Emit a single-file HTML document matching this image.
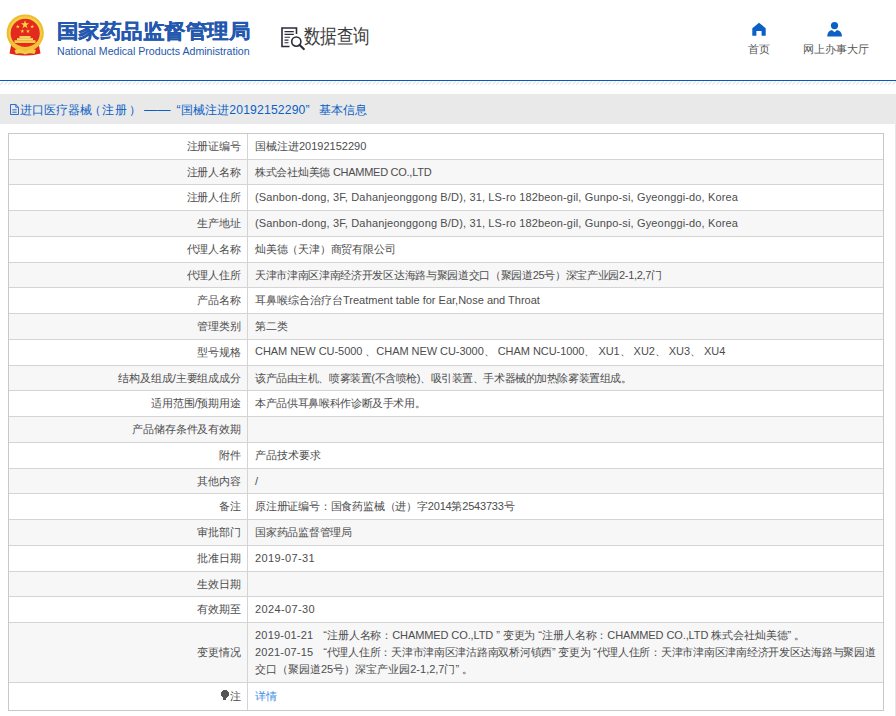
<!DOCTYPE html>
<html><head><meta charset="utf-8">
<style>
*{box-sizing:border-box}
html,body{margin:0;padding:0;background:#fff;width:896px;height:716px;overflow:hidden;position:relative;font-family:"Liberation Sans",sans-serif;}
.abs{position:absolute;white-space:nowrap}
#title{left:57px;top:17.5px;transform:scaleY(0.93);transform-origin:0 0;font-size:21px;font-weight:bold;color:#2458ae;line-height:30px;letter-spacing:0.45px;-webkit-text-stroke:0.35px #2458ae}
#en{left:57px;top:44px;font-size:10.6px;letter-spacing:0px;color:#2458ae;line-height:14px}
#dq{left:304px;top:22px;font-size:18px;color:#3a3a3a;line-height:26px;transform:scale(0.91,1.1);transform-origin:0 0}
.nav{font-size:11px;color:#555;line-height:14px}
#blue{left:0;top:80px;width:896px;height:1px;background:#0659c2}
#hatch{left:0;top:81px;width:896px;height:4px}
#bar{left:0;top:94px;width:896px;height:30px;background:#e9e9e9;border-bottom:1px solid #e7e9ef}
.bt{top:102px;font-size:12.2px;color:#0b5fc6;line-height:16px}
#vline{left:895px;top:124px;width:1px;height:592px;background:#e6e6e6}
#tbl{left:8px;top:133px;width:876px;height:578px;border:1px solid #c9c9c9}
.row{position:absolute;left:0;width:874px;border-top:1px solid #d4d4d4}
.row.g{background:#f7f7f7}
.pin{display:inline-block;position:relative;top:-1.5px;width:8px;height:10px;margin-right:1.5px;background:radial-gradient(circle at 4px 4px,#555 0 3.8px,transparent 4px),linear-gradient(#555,#555) 2.5px 7px/3px 3px no-repeat}
.lat{letter-spacing:0.15px;position:relative;top:-1px}
.lab{position:absolute;left:0;width:238px;top:0;bottom:0;text-align:right;padding-right:6px;letter-spacing:-0.12px;font-size:11px;color:#4d4d4d;display:flex;align-items:center;justify-content:flex-end}
.val{position:absolute;left:238px;right:0;top:0;bottom:0;border-left:1px solid #d4d4d4;padding-left:7px;font-size:11px;color:#4d4d4d;display:flex;align-items:center}
</style></head><body>
<!-- emblem -->
<svg class="abs" style="left:4px;top:12px" width="44" height="46" viewBox="0 0 44 46">
  <path d="M7.5 31 L5.5 41.5 Q13 43.8 21 43.5 Q29 43.8 36.5 41.5 L34.5 31 Z" fill="#e3261d"/>
  <circle cx="21.2" cy="21" r="18.6" fill="#efbd2a"/>
  <circle cx="21.2" cy="21" r="16.6" fill="#f6d04a"/>
  <circle cx="21.2" cy="21.3" r="14.6" fill="#e42a1f"/>
  <path d="M6.8 28 Q21.2 42 35.6 28 L36.2 32 Q21.2 46 6.2 32 Z" fill="#f0c33a"/>
  <path d="M10.5 38.3 Q15 35.5 19 38.5 Q21.2 40 23.4 38.5 Q27.4 35.5 31.9 38.3 L30.5 42 Q26 40.2 21.2 42.5 Q16.4 40.2 11.9 42 Z" fill="#f3cd45"/>
  <polygon points="21,8.3 22,11.3 25.1,11.3 22.6,13.2 23.5,16.2 21,14.4 18.5,16.2 19.4,13.2 16.9,11.3 20,11.3" fill="#f7d43c"/>
  <polygon points="13.8,12.6 14.3,14 15.8,14 14.6,14.9 15,16.3 13.8,15.4 12.6,16.3 13,14.9 11.8,14 13.3,14" fill="#f7d43c"/>
  <polygon points="28.2,12.6 28.7,14 30.2,14 29,14.9 29.4,16.3 28.2,15.4 27,16.3 27.4,14.9 26.2,14 27.7,14" fill="#f7d43c"/>
  <polygon points="18.3,17.2 18.8,18.6 20.3,18.6 19.1,19.5 19.5,20.9 18.3,20 17.1,20.9 17.5,19.5 16.3,18.6 17.8,18.6" fill="#f7d43c"/>
  <polygon points="24,17.2 24.5,18.6 26,18.6 24.8,19.5 25.2,20.9 24,20 22.8,20.9 23.2,19.5 22,18.6 23.5,18.6" fill="#f7d43c"/>
  <rect x="15.5" y="24" width="11" height="2.2" fill="#f6d35a"/>
  <rect x="13" y="26.2" width="16" height="2" fill="#f8dc70"/>
  <rect x="10.5" y="28.2" width="21" height="2.8" fill="#f5cf4c"/>
</svg>
<div class="abs" id="title">国家药品监督管理局</div>
<div class="abs" id="en">National Medical Products Administration</div>
<!-- data query icon -->
<svg class="abs" style="left:278px;top:24px" width="30" height="28" viewBox="0 0 30 28">
  <g fill="none" stroke="#2b2b3b" stroke-width="1.6">
    <path d="M11.5 22.5 H4 V4 H18.5 V10"/>
    <circle cx="18.3" cy="17.6" r="4.6"/>
    <path d="M21.6 21 L25.8 25" stroke-width="2.2" stroke-linecap="round"/>
  </g>
  <g stroke="#2b2b3b" stroke-width="1.1">
    <path d="M6.5 7.6 H15.8 M6.5 10.4 H15.8 M6.5 13.3 H12 M6.5 16.1 H10.5 M6.5 18.8 H10.5"/>
  </g>
</svg>
<div class="abs" id="dq">数据查询</div>
<!-- nav -->
<svg class="abs" style="left:752px;top:22px" width="14" height="14" viewBox="0 0 14 14">
  <path d="M0.3 6.2 L7 0.8 L13.7 6.2 V13.8 H9.6 V9 H4.4 V13.8 H0.3 Z" fill="#0b5fc6"/>
</svg>
<div class="abs nav" style="left:748px;top:42px;font-size:11.3px;letter-spacing:0px">首页</div>
<svg class="abs" style="left:826px;top:21px" width="18" height="17" viewBox="0 0 18 17">
  <circle cx="8.5" cy="4.6" r="3.6" fill="#0b5fc6"/>
  <path d="M1.2 15.6 Q1.4 9.6 6 8.9 L8.5 11.2 L11 8.9 Q15.8 9.6 16 15.6 Z" fill="#0b5fc6"/>
</svg>
<div class="abs nav" style="left:803px;top:42px">网上办事大厅</div>

<div class="abs" id="blue"></div>
<svg class="abs" id="hatch" width="896" height="4" viewBox="0 0 896 4"><defs><pattern id="hp" width="4" height="4" patternUnits="userSpaceOnUse"><path d="M-1 5 L5 -1" stroke="#e6e6e6" stroke-width="1.2"/></pattern></defs><rect width="896" height="4" fill="url(#hp)"/></svg>
<div class="abs" id="bar"></div>
<svg class="abs" style="left:9px;top:103px" width="11" height="13" viewBox="0 0 11 13">
  <path d="M1.5 1.5 H6.8 L9.5 4.2 V11.5 H1.5 Z M6.8 1.5 V4.2 H9.5 M3.3 6.8 H7.7 M3.3 9.2 H7.7" fill="none" stroke="#2566c8" stroke-width="0.95"/>
</svg>
<div class="abs bt" style="left:19.5px">进口医疗器械</div>
<div class="abs bt" style="left:89px;letter-spacing:1.2px">（注册）</div>
<div class="abs bt" style="left:144px;letter-spacing:0px;transform:scaleX(1.08);transform-origin:0 0">——</div>
<div class="abs bt" style="left:176.5px;letter-spacing:0.15px">“国械注进20192152290”</div>
<div class="abs bt" style="left:319px">基本信息</div>
<div class="abs" id="vline"></div>

<div class="abs" id="tbl">
<div class="row" style="top:0px;height:25px;border-top:0"><div class="lab">注册证编号</div><div class="val">国械注进20192152290</div></div>
<div class="row g" style="top:25px;height:25px"><div class="lab">注册人名称</div><div class="val"><span style="letter-spacing:-0.27px">株式会社灿美德 CHAMMED CO.,LTD</span></div></div>
<div class="row" style="top:50px;height:26px"><div class="lab">注册人住所</div><div class="val"><span class=lat>(Sanbon-dong, 3F, Dahanjeonggong B/D), 31, LS-ro 182beon-gil, Gunpo-si, Gyeonggi-do, Korea</span></div></div>
<div class="row g" style="top:76px;height:26px"><div class="lab">生产地址</div><div class="val"><span class=lat>(Sanbon-dong, 3F, Dahanjeonggong B/D), 31, LS-ro 182beon-gil, Gunpo-si, Gyeonggi-do, Korea</span></div></div>
<div class="row" style="top:102px;height:26px"><div class="lab">代理人名称</div><div class="val"><span style="letter-spacing:-0.2px">灿美德（天津）商贸有限公司</span></div></div>
<div class="row g" style="top:128px;height:25px"><div class="lab">代理人住所</div><div class="val"><span style="letter-spacing:-0.32px">天津市津南区津南经济开发区达海路与聚园道交口（聚园道25号）深宝产业园2-1,2,7门</span></div></div>
<div class="row" style="top:153px;height:26px"><div class="lab">产品名称</div><div class="val">耳鼻喉综合治疗台Treatment table for Ear,Nose and Throat</div></div>
<div class="row g" style="top:179px;height:26px"><div class="lab">管理类别</div><div class="val">第二类</div></div>
<div class="row" style="top:205px;height:26px"><div class="lab">型号规格</div><div class="val"><span class=lat style="letter-spacing:-0.05px">CHAM NEW CU-5000 、CHAM NEW CU-3000、 CHAM NCU-1000、 XU1、 XU2、 XU3、 XU4</span></div></div>
<div class="row g" style="top:231px;height:25px"><div class="lab">结构及组成/主要组成成分</div><div class="val"><span style="letter-spacing:-0.43px">该产品由主机、喷雾装置(不含喷枪)、吸引装置、手术器械的加热除雾装置组成。</span></div></div>
<div class="row" style="top:256px;height:26px"><div class="lab">适用范围/预期用途</div><div class="val"><span style="letter-spacing:-0.35px">本产品供耳鼻喉科作诊断及手术用。</span></div></div>
<div class="row g" style="top:282px;height:26px"><div class="lab">产品储存条件及有效期</div><div class="val"></div></div>
<div class="row" style="top:308px;height:26px"><div class="lab">附件</div><div class="val">产品技术要求</div></div>
<div class="row g" style="top:334px;height:25px"><div class="lab">其他内容</div><div class="val">/</div></div>
<div class="row" style="top:359px;height:26px"><div class="lab">备注</div><div class="val"><span style="letter-spacing:-0.2px">原注册证编号：国食药监械（进）字2014第2543733号</span></div></div>
<div class="row g" style="top:385px;height:26px"><div class="lab">审批部门</div><div class="val"><span style="letter-spacing:-0.25px">国家药品监督管理局</span></div></div>
<div class="row" style="top:411px;height:26px"><div class="lab">批准日期</div><div class="val"><span style="letter-spacing:0.36px;position:relative;top:-1px">2019-07-31</span></div></div>
<div class="row g" style="top:437px;height:25px"><div class="lab">生效日期</div><div class="val"></div></div>
<div class="row" style="top:462px;height:26px"><div class="lab">有效期至</div><div class="val"><span style="letter-spacing:0.36px;position:relative;top:-1px">2024-07-30</span></div></div>
<div class="row g" style="top:488px;height:60px"><div class="lab">变更情况</div><div class="val"><div style="line-height:17px"><span style="letter-spacing:0.2px">2019-01-21</span><span style="margin-left:10px;letter-spacing:-0.1px">“注册人名称：CHAMMED CO.,LTD ” 变更为 “注册人名称：CHAMMED CO.,LTD 株式会社灿美德” 。</span><br><span style="letter-spacing:0.2px">2021-07-15</span><span style="margin-left:10px;letter-spacing:-0.27px">“代理人住所：天津市津南区津沽路南双桥河镇西” 变更为 “代理人住所：天津市津南区津南经济开发区达海路与聚园道</span><br>交口（聚园道25号）深宝产业园2-1,2,7门” 。</div></div></div>
<div class="row" style="top:548px;height:28px"><div class="lab"><span class="pin"></span>注</div><div class="val"><span style="color:#3a8ee8">详情</span></div></div>
</div>
</body></html>
